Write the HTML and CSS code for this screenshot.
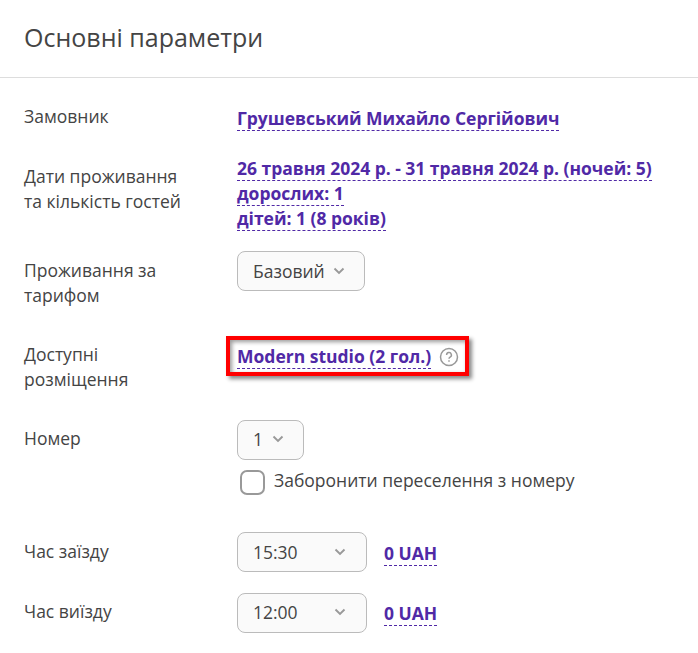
FILE: index.html
```html
<!DOCTYPE html>
<html lang="uk">
<head>
<meta charset="utf-8">
<title>Основні параметри</title>
<link rel="stylesheet" href="styles.css">
</head>
<body>
<header class="head"><h1>Основні параметри</h1></header>
<main class="form">
  <div class="row customer"><div class="label">Замовник</div><div class="value"><a class="link">Грушевський Михайло Сергійович</a></div></div>
  <div class="row dates"><div class="label">Дати проживання<br>та кількість гостей</div><div class="value"><a class="link">26 травня 2024 р. - 31 травня 2024 р. (ночей: 5)</a><br><a class="link">дорослих: 1</a><br><a class="link">дітей: 1 (8 років)</a></div></div>
  <div class="row tariff"><div class="label">Проживання за<br>тарифом</div><div class="select wide"><span>Базовий</span><svg class="chev" viewBox="0 0 12 8"><path d="M1.500 1.500 6 6l4.500-4.500"/></svg></div></div>
  <div class="row rooms"><div class="label">Доступні<br>розміщення</div><div class="highlight"><a class="link">Modern studio (2 гол.)</a><svg class="help" viewBox="0 0 20 20"><circle cx="10" cy="10" r="8.500"/><path d="M7.600 8a2.400 2.400 0 1 1 3.500 2.100c-.8.500-1.100.8-1.100 1.600M10 13.300v1.500"/></svg></div></div>
  <div class="row number"><div class="label">Номер</div><div class="select small"><span>1</span><svg class="chev" viewBox="0 0 12 8"><path d="M1.500 1.500 6 6l4.500-4.500"/></svg></div></div>
  <div class="check"><span class="box"></span><span>Заборонити переселення з номеру</span></div>
  <div class="row arrive"><div class="label">Час заїзду</div><div class="select time"><span>15:30</span><svg class="chev" viewBox="0 0 12 8"><path d="M1.500 1.500 6 6l4.500-4.500"/></svg></div><div class="price"><a class="link">0 UAH</a></div></div>
  <div class="row leave"><div class="label">Час виїзду</div><div class="select time"><span>12:00</span><svg class="chev" viewBox="0 0 12 8"><path d="M1.500 1.500 6 6l4.500-4.500"/></svg></div><div class="price"><a class="link">0 UAH</a></div></div>
</main>
</body>
</html>
```
FILE: styles.css
```css
* { box-sizing: border-box; }
body { margin: 0; background: #fff; color: #444; font: 17.5px/25px "Open Sans", sans-serif; overflow: hidden; }
.head { height: 78px; padding: 19px 24px 0; border-bottom: 1px solid #ddd; }
h1 { margin: 0; font-size: 25px; line-height: 36px; font-weight: 400; }
.form { padding: 26px 24px 0; }
.row { display: flex; align-items: flex-start; white-space: nowrap; }
.label { flex: 0 0 213px; }
.customer { height: 52px; }
.customer .value { padding-top: 2px; }
.customer .link { letter-spacing: -.03px; }
.dates { height: 95px; }
.dates .label { padding-top: 8px; }
.dates .link { letter-spacing: -.02px; }
.tariff { height: 85px; }
.tariff .label { padding-top: 7px; }
.rooms { height: 84px; }
.rooms .label { padding-top: 6px; }
.number { height: 48px; }
.number .label { padding-top: 6px; }
.arrive { height: 61px; }
.arrive .label { padding-top: 7px; }
.leave .label { padding-top: 6px; }
.link { color: #5029a6; font-weight: 700; border-bottom: 1px dashed #5029a6; }
.select { height: 40px; display: flex; align-items: center; justify-content: space-between; padding: 0 19px 0 15px; border: 1px solid #bbb; border-radius: 8px; background: #fafafa; }
.wide { width: 128px; }
.small { width: 67px; }
.small, .leave .select { padding-bottom: 2px; }
.time { width: 130px; padding-right: 20px; }
.chev { width: 12px; height: 8px; fill: none; stroke: #999; stroke-width: 1.9; }
.highlight { display: flex; align-items: center; width: 243px; height: 40px; margin-left: -11px; padding: 1px 0 0 7px; border: 4px solid #f00; box-shadow: 3px 3px 4px #0007, inset 2px 2px 4px #0006; }
.highlight .link { line-height: 24px; }
.help { width: 20px; height: 20px; margin-left: 8px; fill: none; stroke: #999; stroke-width: 1.5; }
.check { display: flex; height: 64px; padding-left: 216px; gap: 9px; }
.box { width: 25px; height: 25px; margin-top: 2px; border: 2px solid #999; border-radius: 7px; }
.price { padding: 9px 0 0 17px; }
.leave .price { padding-top: 8px; }
```
